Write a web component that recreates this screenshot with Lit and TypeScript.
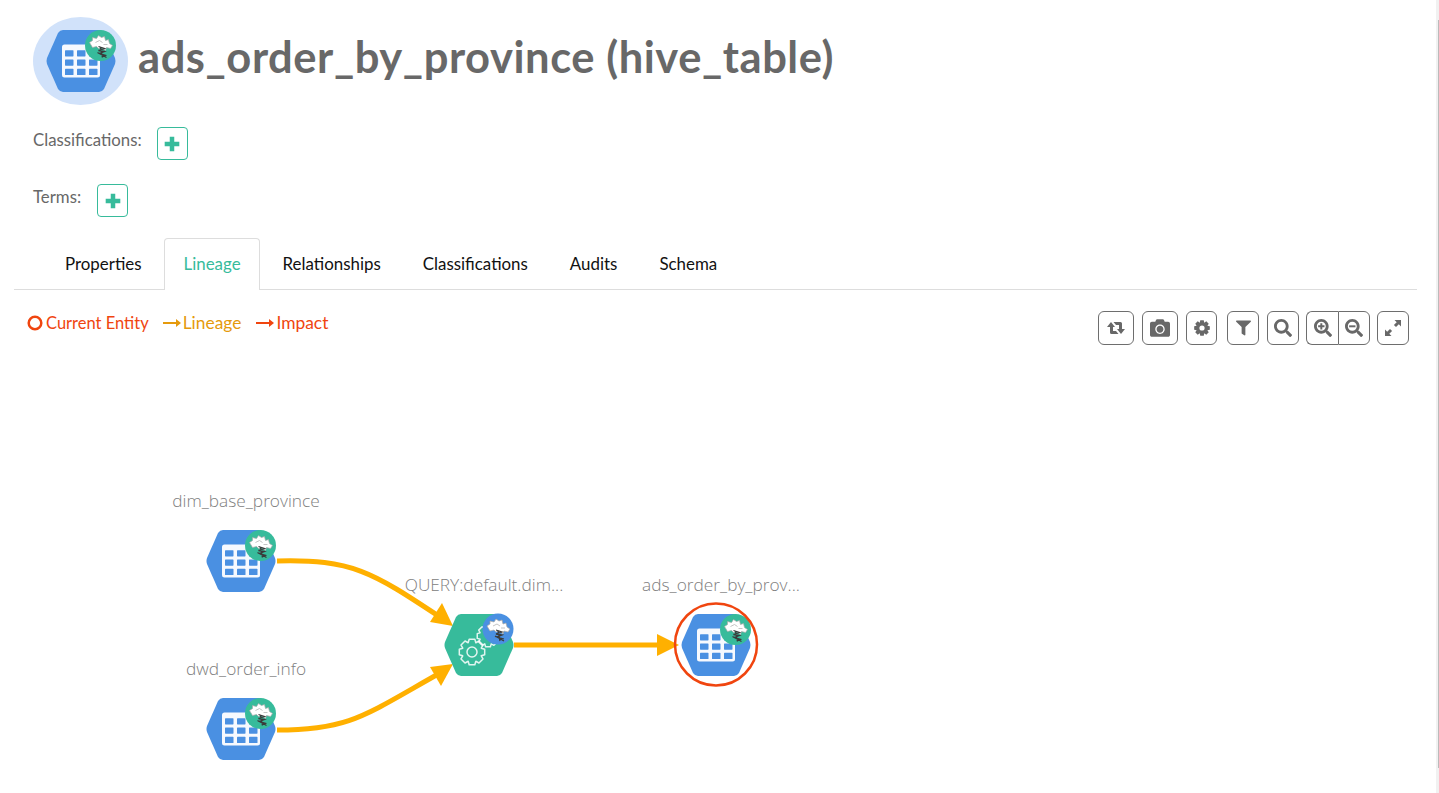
import { LitElement, html, css, svg } from "lit";
import { customElement } from "lit/decorators.js";

const ORANGE = "#ffb000";
const GREEN = "#37bb9b";
const BLUE = "#4a90e2";

// hexagon with rounded corners, centred on 0,0
const HEX = "M-18 -31 H18 Q21 -31 23 -28 L34 -3 Q35 0 34 3 L23 28 Q21 31 18 31 H-18 Q-21 31 -23 28 L-34 3 Q-35 0 -34 -3 L-23 -28 Q-21 -31 -18 -31 Z";

function gearPath(cx: number, cy: number, outer: number, inner: number, teeth: number) {
  const pts: string[] = [];
  const step = (Math.PI * 2) / teeth;
  for (let i = 0; i < teeth; i++) {
    const a = i * step;
    const offs: [number, number][] = [
      [-0.5, inner],
      [-0.28, outer],
      [0.28, outer],
      [0.5, inner],
    ];
    for (const [o, r] of offs) {
      const t = a + o * step;
      pts.push(`${(cx + r * Math.cos(t)).toFixed(2)} ${(cy + r * Math.sin(t)).toFixed(2)}`);
    }
  }
  return "M" + pts.join("L") + "Z";
}

// the small hive logo: ragged white cloud with a dark streak under it
function badge(x: number, y: number, fill: string) {
  return svg`
    <g transform="translate(${x} ${y})">
      <circle r="15.5" fill=${fill}></circle>
      <path d="M-11 -3 L-8 -5 L-8 -8 L-4 -7 L-2 -10 L1 -8 L4 -9 L5 -5 L8 -6 L9 -2 L12 0 L10 3 L6 2 L5 5 L1 2 L-2 3 L-4 1 L-8 2 Z" fill="#fff" stroke="#a8a8a8" stroke-width=".7"></path>
      <path d="M-5 -3 L-1 -5 L2 -3 M3 -1 L7 -1" fill="none" stroke="#c4c4c4" stroke-width="1"></path>
      <path d="M-2 1 L4 3 L-2 5 L4 6 L-1 8 L6 10 M0 2 L2 12 M-3 7 L6 12" fill="none" stroke="#3a3a3a" stroke-width="1.300"></path>
    </g>`;
}

function tableNode(x: number, y: number) {
  const cells = [];
  for (let r = 0; r < 3; r++) {
    for (let c = 0; c < 3; c++) {
      cells.push(svg`<rect x=${-16 + c * 12} y=${-10.8 + r * 9.3} width="8.5" height="6.2" rx=".6" fill=${BLUE}></rect>`);
    }
  }
  return svg`
    <g transform="translate(${x} ${y})">
      <path d=${HEX} fill=${BLUE}></path>
      <rect x="-19" y="-16.5" width="38" height="33" rx="2.5" fill="#fff" opacity=".95"></rect>
      ${cells}
    </g>
    ${badge(x + 19.5, y - 15.5, GREEN)}`;
}

function processNode(x: number, y: number) {
  return svg`
    <g transform="translate(${x} ${y})">
      <path d=${HEX} fill=${GREEN}></path>
      <path d=${gearPath(-7, 7, 13, 10, 8)} fill="none" stroke="#fff" stroke-opacity=".85" stroke-width="1.5" stroke-linejoin="round"></path>
      <circle cx="-7" cy="7" r="5" fill="none" stroke="#fff" stroke-opacity=".85" stroke-width="1.5"></circle>
      <path d=${gearPath(9, -9, 11, 8.5, 8)} fill="none" stroke="#fff" stroke-opacity=".85" stroke-width="1.5" stroke-linejoin="round"></path>
    </g>
    ${badge(x + 19, y - 16, BLUE)}`;
}

@customElement("app-root")
export class AppRoot extends LitElement {
  static styles = css`
    :host {
      display: block;
      position: relative;
      height: 793px;
      overflow: hidden;
      background: #fff;
      font-family: Lato, "Noto Sans", sans-serif;
      color: #686868;
    }
    .track {
      position: absolute;
      top: 0;
      right: 0;
      bottom: 0;
      width: 3px;
      background: #f1f1f1;
    }
    .thumb {
      position: absolute;
      top: 20px;
      right: 0;
      width: 1.500px;
      height: 748px;
      background: #bbb;
    }
    .head {
      display: flex;
      align-items: center;
      gap: 10px;
      padding: 17px 0 0 33px;
      height: 88px;
    }
    .title {
      margin: -11px 0 0;
      font-size: 43.500px;
      letter-spacing: .55px;
      line-height: 80px;
      font-weight: 700;
      color: #686868;
      white-space: nowrap;
    }
    .tagrow {
      display: flex;
      align-items: flex-start;
      padding-left: 33px;
      font-size: 16.800px;
      line-height: 24px;
      color: #686868;
      gap: 15px;
    }
    .tagrow.cls { margin-top: 22px; }
    .tagrow.trm { margin-top: 24px; gap: 16px; }
    .tagrow span { padding-top: 1px; }
    .add {
      width: 31px;
      height: 33px;
      box-sizing: border-box;
      border: 1px solid #37bb9b;
      border-radius: 4px;
      background: #fff;
      padding: 0;
      display: flex;
      align-items: center;
      justify-content: center;
    }
    .tabs {
      display: flex;
      margin: 21px 22px 0 14px;
      padding-left: 30px;
      height: 52px;
      box-sizing: border-box;
      border-bottom: 1px solid #ddd;
      font-size: 16.900px;
      color: #111;
    }
    .tab {
      padding: 14px 20px 0;
      height: 52px;
      box-sizing: border-box;
      border: 1px solid transparent;
      border-bottom: none;
    }
    .tab.active {
      color: #37bb9b;
      background: #fff;
      border-color: #ddd;
      border-radius: 4px 4px 0 0;
      padding: 14px 18px 0 19px;
      margin: 0 2px 0 1px;
    }
    .bar {
      display: flex;
      justify-content: space-between;
      align-items: flex-start;
      padding: 21px 30px 0 27px;
    }
    .legend {
      display: flex;
      gap: 14px;
      font-size: 16.500px;
      line-height: 24px;
    }
    .legend div { display: flex; align-items: center; gap: 1px; }
    .legend .red { color: #f0450f; }
    .legend .amber { color: #e59a0c; }
    .legend .wide { font-size: 17.400px; }
    .legend .impact { margin-left: 1px; }
    .tools { display: flex; gap: 8px; }
    .btn {
      height: 34px;
      box-sizing: border-box;
      border: 1px solid #6e6e6e;
      border-radius: 6px;
      background: #fff;
      padding: 0;
      display: flex;
      align-items: center;
      justify-content: center;
    }
    .btn svg { fill: #686868; display: block; }
    .w36 { width: 36px; }
    .w32 { width: 32px; }
    .w31 { width: 31px; }
    .filter { margin-left: 2px; }
    .group { display: flex; margin: 0 -1px; }
    .group .btn:first-child { border-radius: 6px 0 0 6px; border-right: none; }
    .group .btn:last-child { border-radius: 0 6px 6px 0; }
    .graph {
      display: block;
      width: 1439px;
      height: 448px;
    }
    .graph text {
      font-family: "Open Sans", sans-serif;
      font-size: 17.300px;
      font-weight: 300;
      fill: #808080;
      text-anchor: middle;
    }
  `;

  private plus() {
    return html`<svg width="18" height="18" viewBox="0 0 16 16"><path d="M6 1.500h4v4.500h4.500v4H10v4.500H6V10H1.500V6H6z" fill=${GREEN}></path></svg>`;
  }

  private lens(sign: "" | "plus" | "minus") {
    return html`<svg width="18" height="18" viewBox="0 0 512 512">
      <path d="M505 442.700L405.300 343c-4.500-4.500-10.600-7-17-7H372c27.600-35.300 44-79.700 44-128C416 93.100 322.900 0 208 0S0 93.100 0 208s93.100 208 208 208c48.300 0 92.700-16.400 128-44v16.300c0 6.400 2.500 12.500 7 17l99.700 99.700c9.400 9.400 24.600 9.400 33.900 0l28.300-28.300c9.400-9.400 9.400-24.600.1-34zM208 336c-70.700 0-128-57.200-128-128 0-70.700 57.200-128 128-128 70.700 0 128 57.200 128 128 0 70.700-57.200 128-128 128z"></path>
      ${sign === "plus" ? svg`<path d="M180 118h56v62h62v56h-62v62h-56v-62h-62v-56h62z"></path>` : ""}
      ${sign === "minus" ? svg`<path d="M118 180h180v56H118z"></path>` : ""}
    </svg>`;
  }

  render() {
    return html`
      <div class="head">
        <svg width="95" height="88" viewBox="0 0 95 88">
          <ellipse cx="47.500" cy="44" rx="47.500" ry="44" fill="#d1e2fa"></ellipse>
          ${tableNode(48, 44)}
        </svg>
        <h1 class="title">ads_order_by_province (hive_table)</h1>
      </div>
      <div class="tagrow cls"><span>Classifications:</span><button class="add">${this.plus()}</button></div>
      <div class="tagrow trm"><span>Terms:</span><button class="add">${this.plus()}</button></div>
      <div class="tabs">
        <div class="tab">Properties</div>
        <div class="tab active">Lineage</div>
        <div class="tab">Relationships</div>
        <div class="tab">Classifications</div>
        <div class="tab">Audits</div>
        <div class="tab">Schema</div>
      </div>
      <div class="bar">
        <div class="legend">
          <div class="red">
            <svg width="18" height="16" viewBox="0 0 18 16"><circle cx="8" cy="8" r="6.300" fill="none" stroke="#f0450f" stroke-width="2.500"></circle></svg>
            Current Entity
          </div>
          <div class="amber wide">
            <svg width="19" height="12" viewBox="0 0 19 12"><path d="M0 5h13V2l5 4-5 4V7H0z" fill="#e59a0c"></path></svg>
            Lineage
          </div>
          <div class="red wide impact">
            <svg width="19" height="12" viewBox="0 0 19 12"><path d="M0 5h13V2l5 4-5 4V7H0z" fill="#f0450f"></path></svg>
            Impact
          </div>
        </div>
        <div class="tools">
          <button class="btn w36" title="Realign">
            <svg width="18" height="12" viewBox="0 0 18 12"><path d="M4 0L8 5H6V9H9L11.500 12H4.500Q3 12 3 10.500V5H0zM14 12L10 7H12V3H9L6.500 0H13.500Q15 0 15 1.500V7H18z"></path></svg>
          </button>
          <button class="btn w36" title="Export">
            <svg width="20" height="20" viewBox="0 0 512 512"><path d="M512 144v288c0 26.500-21.500 48-48 48H48c-26.500 0-48-21.500-48-48V144c0-26.500 21.500-48 48-48h88l12.300-32.900c7-18.700 24.900-31.100 44.900-31.100h125.500c20 0 37.900 12.400 44.900 31.100L376 96h88c26.500 0 48 21.500 48 48zM376 288c0-66.200-53.800-120-120-120s-120 53.800-120 120 53.800 120 120 120 120-53.800 120-120zm-32 0c0 48.500-39.500 88-88 88s-88-39.500-88-88 39.500-88 88-88 88 39.500 88 88z"></path></svg>
          </button>
          <button class="btn w31" title="Settings">
            <svg width="16" height="16" viewBox="0 0 16 16"><path fill-rule="evenodd" d="${gearPath(8, 8, 8, 5.8, 8)} M8 5.400a2.600 2.600 0 1 0 0 5.200a2.600 2.600 0 1 0 0-5.200z"></path></svg>
          </button>
          <button class="btn w32 filter" title="Filter">
            <svg width="15" height="16" viewBox="0 0 512 512"><path d="M487.976 0H24.028C2.710 0-8.047 25.866 7.058 40.971L192 225.941V432c0 7.831 3.821 15.170 10.237 19.662l80 55.980C298.020 518.690 320 507.493 320 487.980V225.941l184.947-184.970C520.021 25.896 509.338 0 487.976 0z"></path></svg>
          </button>
          <button class="btn w32" title="Search">${this.lens("")}</button>
          <div class="group">
            <button class="btn w32" title="Zoom in">${this.lens("plus")}</button>
            <button class="btn w32" title="Zoom out">${this.lens("minus")}</button>
          </div>
          <button class="btn w32" title="Full screen">
            <svg width="16" height="16" viewBox="0 0 16 16"><path d="M9.500 0H16V6.500L13.800 4.300 11 7.100 8.900 5 11.700 2.200zM6.500 16H0V9.500L2.200 11.700 5 8.900 7.100 11 4.300 13.800z"></path></svg>
          </button>
        </div>
      </div>
      <svg class="graph" viewBox="0 345 1439 448">
        <text x="246" y="507">dim_base_province</text>
        <text x="484" y="591">QUERY:default.dim...</text>
        <text x="721" y="591">ads_order_by_prov...</text>
        <text x="246" y="675">dwd_order_info</text>
        <g fill="none" stroke=${ORANGE} stroke-width="5">
          <path d="M277 561 C352 559 372 572 440 617"></path>
          <path d="M277 730 C350 730 365 715 440 673"></path>
          <path d="M514 645 H660"></path>
        </g>
        <g fill=${ORANGE}>
          <path d="M453 626 L430 622 L442 603z"></path>
          <path d="M453 664 L441 686 L430 667z"></path>
          <path d="M679 645 L657 634 V656z"></path>
        </g>
        ${tableNode(241, 561)}
        ${tableNode(241, 729)}
        ${processNode(479, 645)}
        ${tableNode(716, 645)}
        <circle cx="716" cy="644.500" r="41" fill="none" stroke="#f0450f" stroke-width="2.500"></circle>
      </svg>
      <div class="track"></div>
      <div class="thumb"></div>
    `;
  }
}
